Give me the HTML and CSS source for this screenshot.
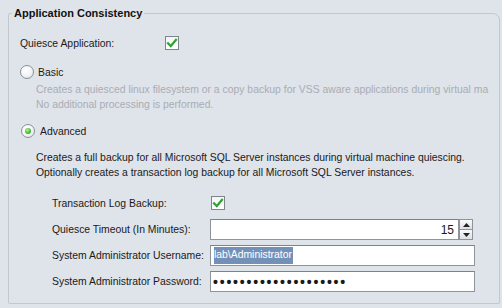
FILE: index.html
```html
<!DOCTYPE html>
<html>
<head>
<meta charset="utf-8">
<link rel="stylesheet" href="styles.css">
</head>
<body>
<fieldset class="group">
  <legend class="title">Application Consistency</legend>
  <div class="inner">
    <div class="row quiesce">
      <span class="lbl lbl-q">Quiesce Application:</span>
      <span class="check"><svg viewBox="0 0 14 14" width="14" height="14"><path d="M3 7.2 L5.8 10 L11 3.8" fill="none" stroke="#33a133" stroke-width="2.2" stroke-linecap="square"/></svg></span>
    </div>
    <div class="row radio-row basic">
      <span class="radio"></span><span>Basic</span>
    </div>
    <div class="desc muted">
      <div>Creates a quiesced linux filesystem or a copy backup for VSS aware applications during virtual ma</div>
      <div>No additional processing is performed.</div>
    </div>
    <div class="row radio-row advanced">
      <span class="radio on"><span class="dot"></span></span><span>Advanced</span>
    </div>
    <div class="desc dark">
      <div>Creates a full backup for all Microsoft SQL Server instances during virtual machine quiescing.</div>
      <div>Optionally creates a transaction log backup for all Microsoft SQL Server instances.</div>
    </div>
    <div class="form">
      <div class="frow r-tx">
        <span class="flbl">Transaction Log Backup:</span>
        <span class="check"><svg viewBox="0 0 14 14" width="14" height="14"><path d="M3 7.2 L5.8 10 L11 3.8" fill="none" stroke="#33a133" stroke-width="2.2" stroke-linecap="square"/></svg></span>
      </div>
      <div class="frow r-to">
        <span class="flbl">Quiesce Timeout (In Minutes):</span>
        <span class="spin">
          <span class="field num">15</span>
          <span class="arrows">
            <span class="arr up"><svg viewBox="0 0 7 4" width="7" height="4"><path d="M0 4 L3.5 0 L7 4Z" fill="#222"/></svg></span>
            <span class="arr down"><svg viewBox="0 0 7 4" width="7" height="4"><path d="M0 0 L3.5 4 L7 0Z" fill="#222"/></svg></span>
          </span>
        </span>
      </div>
      <div class="frow r-user">
        <span class="flbl">System Administrator Username:</span>
        <span class="field wide"><span class="sel">lab\Administrator</span></span>
      </div>
      <div class="frow r-pass">
        <span class="flbl">System Administrator Password:</span>
        <span class="field wide dots">••••••••••••••••••••</span>
      </div>
    </div>
  </div>
</fieldset>
</body>
</html>
```
FILE: styles.css
```css
html, body {
  margin: 0;
  padding: 0;
  background: #dfe3ea;
  width: 502px;
  height: 308px;
  overflow: hidden;
  font-family: "Liberation Sans", Arial, sans-serif;
  font-size: 10.4px;
  color: #1a1a1a;
}
.group {
  margin: 7px 2px 0 8px;
  padding: 0;
  height: 297px;
  border: 1px solid #c3c7ce;
  border-radius: 2px 7px 2px 2px;
  box-sizing: border-box;
  min-width: 0;
}
.title {
  font-weight: bold;
  font-size: 11px;
  padding: 0 2px;
  margin-left: 3px;
  color: #111;
}
.inner {
  overflow: hidden;
  width: 489px;
}
.row {
  display: flex;
  align-items: center;
  height: 16px;
  white-space: nowrap;
}
.quiesce {
  margin-top: 16px;
  padding-left: 11px;
}
.lbl-q {
  width: 145px;
}
.check {
  display: inline-block;
  width: 14px;
  height: 14px;
  box-sizing: border-box;
  border: 1px solid #80858c;
  background: linear-gradient(#f2f4f6, #ffffff);
  position: relative;
}
.check svg {
  position: absolute;
  left: -1px;
  top: -1px;
}
.radio-row {
  padding-left: 11px;
}
.basic {
  margin-top: 13px;
}
.radio {
  display: inline-block;
  width: 14px;
  height: 14px;
  box-sizing: border-box;
  border: 1px solid #8c9097;
  border-radius: 50%;
  background: radial-gradient(circle at 40% 35%, #ffffff 0%, #f3f4f6 50%, #d9dce1 100%);
  margin-right: 4px;
  position: relative;
}
.radio .dot {
  position: absolute;
  left: 3px;
  top: 3px;
  width: 6px;
  height: 6px;
  border-radius: 50%;
  background: radial-gradient(circle at 40% 35%, #b6f0a0 0%, #4dbb3a 55%, #2e8a22 100%);
}
.desc {
  padding-left: 27px;
  white-space: nowrap;
  line-height: 15px;
}
.muted {
  color: #a9adb3;
  margin-top: 2px;
}
.advanced {
  margin-top: 11px;
}
.advanced .radio { margin-left: 1px; }
.advanced .radio + span { margin-left: 1px; }
.dark {
  margin-top: 11px;
}
.form {
  margin-top: 15px;
  padding-left: 43px;
}
.frow {
  display: flex;
  align-items: center;
  white-space: nowrap;
}
.flbl {
  width: 158px;
}
.r-tx {
  height: 16px;
}
.r-tx .check { margin-left: 1px; }
.r-to { margin-top: 8px; }
.r-user { margin-top: 5px; }
.r-pass { margin-top: 5px; }
.field {
  display: inline-flex;
  align-items: center;
  box-sizing: border-box;
  height: 21px;
  background: #fff;
  border: 1px solid #8f949b;
  border-top-color: #7d828a;
  padding: 0 3px;
}
.spin {
  display: inline-flex;
}
.num {
  width: 249px;
  justify-content: flex-end;
  padding-right: 4px;
  font-size: 12px;
}
.arrows {
  display: flex;
  flex-direction: column;
  width: 14px;
  height: 21px;
  box-sizing: border-box;
}
.arr {
  flex: 1;
  display: flex;
  align-items: center;
  justify-content: center;
  border: 1px solid #8f949b;
  background: linear-gradient(#fafbfc, #dde0e4);
  box-sizing: border-box;
}
.arr.down { border-top: none; }
.wide {
  width: 265px;
}
.sel {
  background: #7391b8;
  color: #fff;
  padding: 1px 1px 2px 0;
  line-height: 14px;
}
.dots {
  font-size: 14px;
  font-weight: bold;
  letter-spacing: 1.8px;
  padding-left: 2px;
}
```
